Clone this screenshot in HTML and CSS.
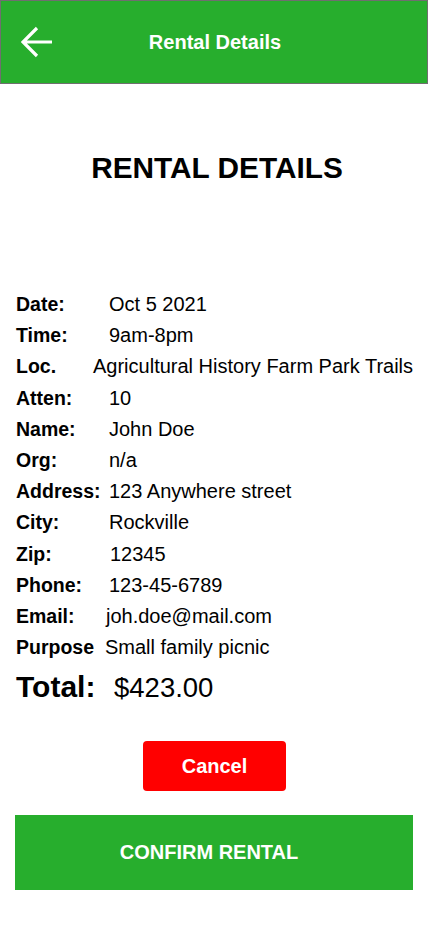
FILE: index.html
```html
<!DOCTYPE html>
<html>
<head>
<meta charset="utf-8">
<link rel="stylesheet" href="styles.css">
</head>
<body>
<header class="topbar">
  <svg class="back" width="32" height="32" viewBox="0 0 32 32">
    <path d="M2 16 H31 M16 2 L2 16 L16 30" fill="none" stroke="#fff" stroke-width="3.2" stroke-linecap="butt" stroke-linejoin="miter"/>
  </svg>
  <div class="topbar-title">Rental Details</div>
</header>
<main class="content">
  <h1 class="heading">RENTAL DETAILS</h1>
  <div class="details">
    <div class="row"><span class="label">Date:</span><span class="value">Oct 5 2021</span></div>
    <div class="row"><span class="label">Time:</span><span class="value">9am-8pm</span></div>
    <div class="row"><span class="label label-loc">Loc.</span><span class="value">Agricultural History Farm Park Trails</span></div>
    <div class="row"><span class="label">Atten:</span><span class="value">10</span></div>
    <div class="row"><span class="label">Name:</span><span class="value">John Doe</span></div>
    <div class="row"><span class="label">Org:</span><span class="value">n/a</span></div>
    <div class="row"><span class="label">Address:</span><span class="value">123 Anywhere street</span></div>
    <div class="row"><span class="label">City:</span><span class="value">Rockville</span></div>
    <div class="row"><span class="label">Zip:</span><span class="value value-zip">12345</span></div>
    <div class="row"><span class="label">Phone:</span><span class="value">123-45-6789</span></div>
    <div class="row"><span class="label label-email">Email:</span><span class="value">joh.doe@mail.com</span></div>
    <div class="row"><span class="label label-purpose">Purpose</span><span class="value">Small family picnic</span></div>
  </div>
  <div class="total"><span class="total-label">Total:</span><span class="total-value">$423.00</span></div>
  <div class="actions">
    <button class="btn-cancel">Cancel</button>
  </div>
  <button class="btn-confirm">CONFIRM RENTAL</button>
</main>
</body>
</html>
```
FILE: styles.css
```css
* { box-sizing: border-box; }
html, body { margin: 0; padding: 0; background: #fff; }
body {
  width: 428px;
  height: 926px;
  font-family: "Liberation Sans", Arial, sans-serif;
  color: #000;
  overflow: hidden;
}
.topbar {
  height: 84px;
  background: #27ae2d;
  border: 1px solid #6f6f6f;
  display: flex;
  align-items: center;
  position: relative;
}
.back {
  margin-left: 20px;
  margin-top: 0px;
  flex: none;
}
.topbar-title {
  position: absolute;
  left: 0;
  right: 0;
  text-align: center;
  color: #fff;
  font-weight: bold;
  font-size: 20px;
  padding-left: 2px;
  pointer-events: none;
}
.content {
  padding: 0 15px;
}
.heading {
  margin: 67px 0 0;
  font-size: 29.8px;
  line-height: 34px;
  font-weight: bold;
  text-align: center;
  padding-left: 6px;
}
.details {
  margin-top: 104px;
  padding-left: 1px;
}
.row {
  display: flex;
  align-items: baseline;
  height: 31.2px;
  line-height: 31.2px;
}
.label {
  font-weight: bold;
  font-size: 19.5px;
  width: 93px;
  flex: none;
  white-space: nowrap;
}
.label-loc { width: 77px; }
.label-email { width: 90px; }
.label-purpose { width: 89px; }
.value {
  font-size: 20px;
  white-space: nowrap;
}
.value-zip { margin-left: 1px; }
.total {
  display: flex;
  align-items: baseline;
  margin-top: 6px;
  line-height: 36px;
  padding-left: 1px;
}
.total-label {
  font-weight: bold;
  font-size: 30px;
  width: 98px;
  flex: none;
}
.total-value {
  font-size: 27.5px;
}
.actions {
  display: flex;
  justify-content: center;
  margin-top: 35px;
}
.btn-cancel {
  width: 143px;
  height: 50px;
  margin-left: 1px;
  background: #ff0000;
  color: #fff;
  border: none;
  border-radius: 4px;
  font-family: "Liberation Sans", Arial, sans-serif;
  font-weight: bold;
  font-size: 20px;
  padding: 0;
}
.btn-confirm {
  display: block;
  width: 398px;
  height: 75px;
  margin-top: 24px;
  background: #27ae2d;
  color: #fff;
  border: none;
  border-radius: 0;
  font-family: "Liberation Sans", Arial, sans-serif;
  font-weight: bold;
  font-size: 20px;
  padding: 0 10px 0 0;
}
```
